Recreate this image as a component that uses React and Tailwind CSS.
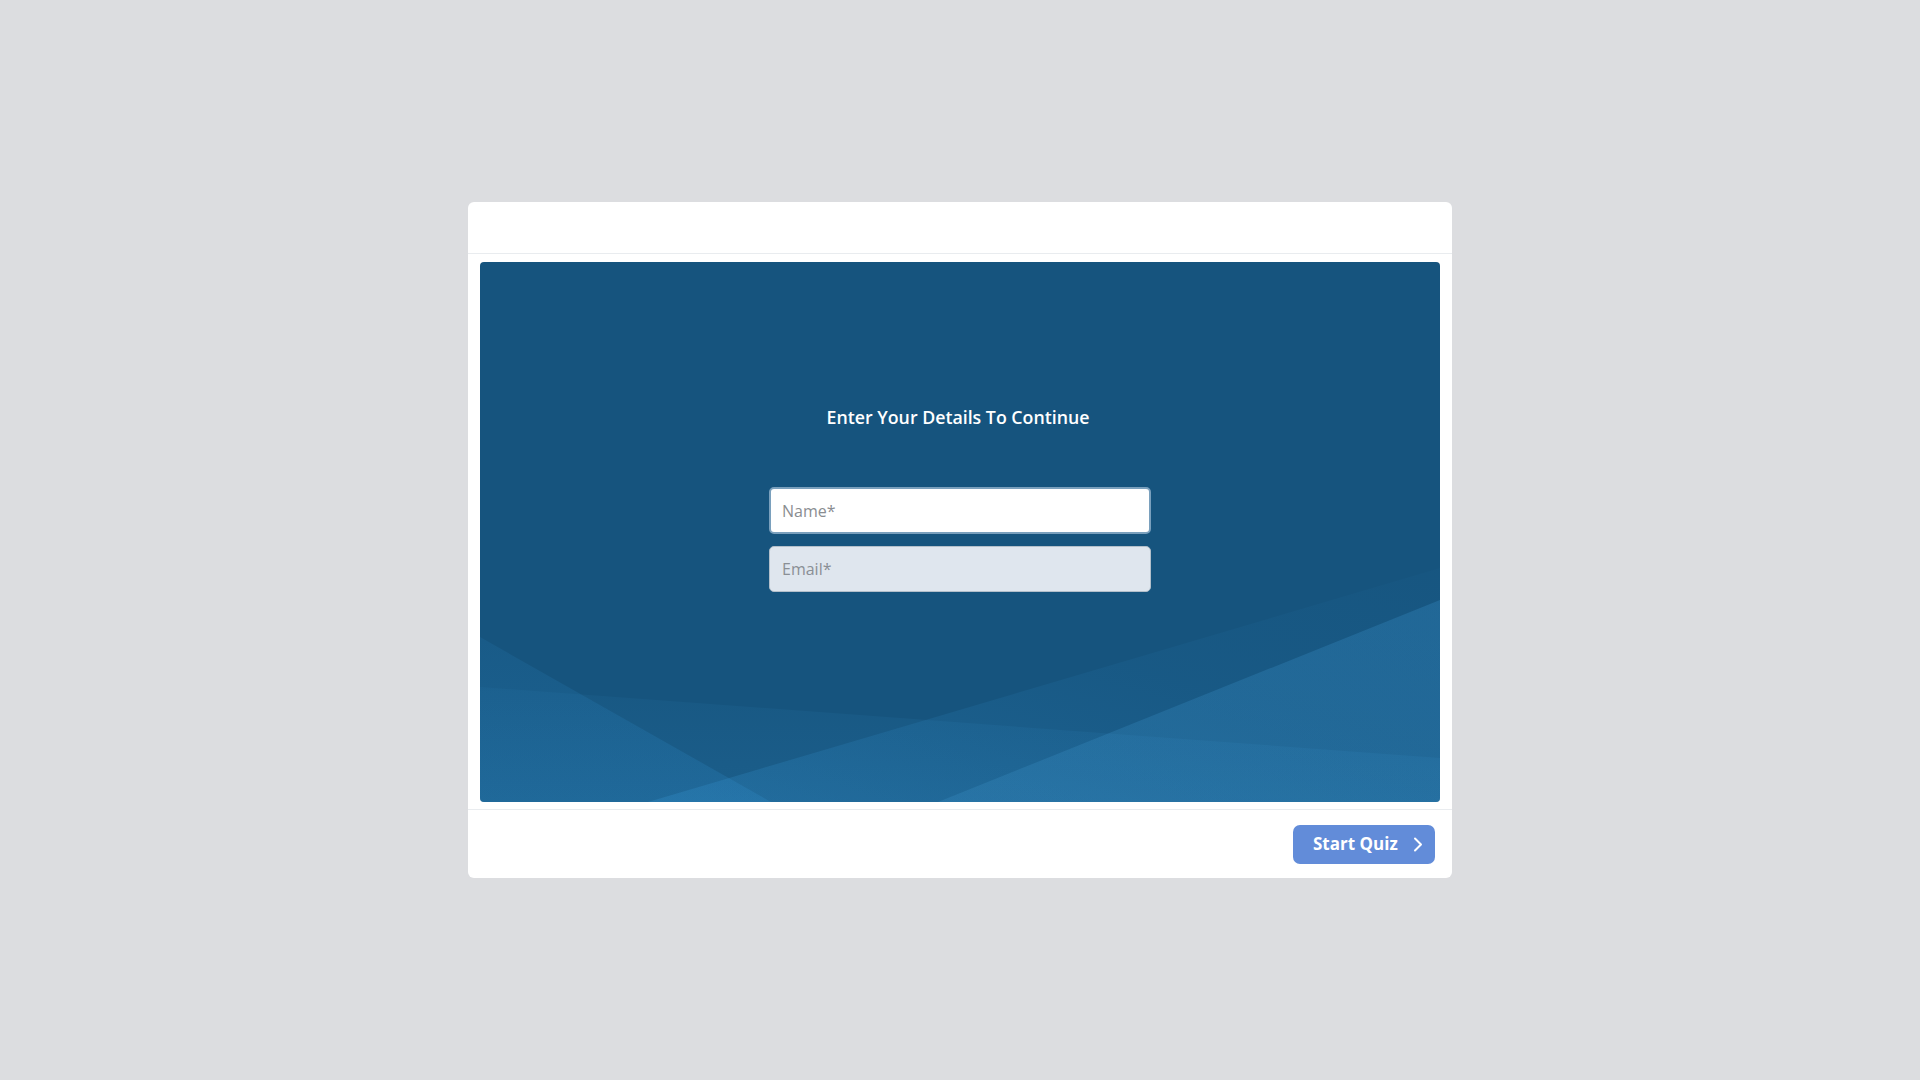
import React from 'react';

const Waves = () => (
  <svg
    className="absolute inset-0 w-full h-full"
    viewBox="0 0 960 540"
    preserveAspectRatio="none"
  >
    <defs>
      <linearGradient id="gA" x1="0" y1="0" x2="0" y2="1">
        <stop offset="0" stopColor="#2f8fd0" stopOpacity="0.12" />
        <stop offset="1" stopColor="#2f8fd0" stopOpacity="0.22" />
      </linearGradient>
      <linearGradient id="gB" x1="0" y1="0" x2="0" y2="1">
        <stop offset="0" stopColor="#3a9ad6" stopOpacity="0.06" />
        <stop offset="1" stopColor="#3a9ad6" stopOpacity="0.14" />
      </linearGradient>
      <linearGradient id="gC" x1="0" y1="1" x2="1" y2="0">
        <stop offset="0" stopColor="#3b9ede" stopOpacity="0.24" />
        <stop offset="0.6" stopColor="#2c86c2" stopOpacity="0.1" />
        <stop offset="1" stopColor="#2c86c2" stopOpacity="0.04" />
      </linearGradient>
      <linearGradient id="gD" x1="0" y1="1" x2="1" y2="0">
        <stop offset="0" stopColor="#4aa6df" stopOpacity="0.18" />
        <stop offset="1" stopColor="#3d98d4" stopOpacity="0.26" />
      </linearGradient>
    </defs>
    <polygon points="0,375 291,540 0,540" fill="url(#gA)" />
    <polygon points="0,425 960,496 960,540 0,540" fill="url(#gB)" />
    <polygon points="168,540 960,306 960,540" fill="url(#gC)" />
    <polygon points="458,540 960,338 960,540" fill="url(#gD)" />
  </svg>
);

const App = () => {
  return (
    <div
      className="w-full h-screen bg-[#dcdde0] flex items-center justify-center"
      style={{ fontFamily: '"Open Sans", "Noto Sans", sans-serif' }}
    >
      <div className="w-[984px] bg-white rounded-[6px] flex flex-col">
        <div className="h-[52px] border-b border-[#e9ecef]"></div>

        <div className="px-3 pt-2 pb-[7px]">
          <div className="relative h-[540px] bg-[#16547e] rounded-[4px] overflow-hidden">
            <Waves />
            <div className="relative flex flex-col items-center pt-[142px]">
              <h2 className="pr-[4px] text-[17.75px] leading-[27px] font-semibold text-white">
                Enter Your Details To Continue
              </h2>
              <div className="mt-[56px] flex flex-col gap-3">
                <input
                  type="text"
                  placeholder="Name*"
                  className="w-[382px] h-[47px] px-[11px] bg-white border-2 border-[#7aa0bd] rounded-[5px] text-[16px] text-gray-700 placeholder:text-[#8a8d91] outline-none"
                />
                <input
                  type="email"
                  placeholder="Email*"
                  className="w-[382px] h-[46px] px-[12px] bg-[#dfe6ee] border border-[#b3bfca] rounded-[5px] text-[16px] text-gray-700 placeholder:text-[#8a8f95] outline-none"
                />
              </div>
            </div>
          </div>
        </div>

        <div className="h-[69px] border-t border-[#e9ecef] flex items-center justify-end pr-[17px]">
          <button className="h-[39px] w-[142px] bg-[#628cd9] rounded-[7px] flex items-center pl-[20px] text-white text-[17px] font-bold">
            <span>Start Quiz</span>
            <svg className="ml-[15px]" width="10" height="15" viewBox="0 0 10 15" fill="none">
              <path d="M2 1.5 L8 7.5 L2 13.5" stroke="white" strokeWidth="2" strokeLinecap="round" strokeLinejoin="round" />
            </svg>
          </button>
        </div>
      </div>
    </div>
  );
};

export default App;
